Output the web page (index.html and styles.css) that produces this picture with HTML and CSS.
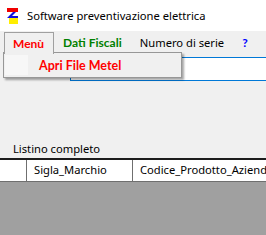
FILE: index.html
```html
<!DOCTYPE html>
<html>
<head>
<meta charset="utf-8">
<link rel="stylesheet" href="styles.css">
</head>
<body>
<div class="window">
  <div class="titlebar">
    <svg class="appicon" width="12" height="16" viewBox="0 0 12 16">
      <rect x="0" y="0" width="11" height="4" fill="#f00000"/>
      <polygon points="6,4 9,4 3,10 0,10" fill="#1010e0"/>
      <rect x="2" y="8" width="9" height="3" fill="#1010e0"/>
      <rect x="2" y="10" width="9" height="6" fill="#ffee00"/>
    </svg>
    <span class="title">Software preventivazione elettrica</span>
  </div>
  <div class="menubar">
    <div class="mitem menu-open red">Menù</div>
    <div class="mitem green">Dati Fiscali</div>
    <div class="mitem plain">Numero di serie</div>
    <div class="mitem blue">?</div>
  </div>
  <div class="searchrow">
    <div class="searchbox"></div>
  </div>
  <div class="spacer"></div>
  <div class="label">Listino completo</div>
  <div class="grid">
    <div class="ghead">
      <div class="gcell c0"></div>
      <div class="gcell c1">Sigla_Marchio</div>
      <div class="gcell c2">Codice_Prodotto_Azienda</div>
    </div>
    <div class="gbody"></div>
  </div>
  <div class="dropdown">
    <div class="iconcol"></div>
    <div class="ditem">Apri File Metel</div>
  </div>
</div>
</body>
</html>
```
FILE: styles.css
```css
html, body {
  margin: 0;
  padding: 0;
}
body {
  background: #f0f0f0;
  font-family: "Noto Sans", "DejaVu Sans", sans-serif;
  font-size: 11px;
  color: #000;
  overflow: hidden;
}
.window {
  position: relative;
  width: 266px;
  height: 235px;
  display: flex;
  flex-direction: column;
  overflow: hidden;
}
.titlebar {
  height: 31px;
  background: #fff;
  display: flex;
  align-items: center;
  padding-left: 7px;
  flex: none;
}
.appicon {
  display: block;
  margin-top: 1px;
}
.title {
  margin-left: 8px;
  font-size: 11.2px;
  white-space: nowrap;
}
.menubar {
  height: 22px;
  display: flex;
  align-items: stretch;
  flex: none;
  padding-left: 4px;
}
.mitem {
  display: flex;
  align-items: center;
  padding: 0 9px;
  white-space: nowrap;
  font-size: 11.2px;
}
.menu-open {
  border: 1px solid #a0a0a0;
  border-bottom: none;
  margin-top: 1px;
  background: #f0f0f0;
  padding: 0 9px 0 8px;
  position: relative;
  z-index: 3;
  height: 22px;
  box-sizing: border-box;
  margin-bottom: -1px;
}
.red, .green, .blue {
  font-family: Lato, "Liberation Sans", sans-serif;
  font-weight: bold;
  font-size: 12px;
}
.red { color: #ff0000; }
.green { color: #008000; }
.blue { color: #0000ff; }
.searchrow {
  margin-top: 4px;
  height: 24px;
  padding-left: 70px;
  display: flex;
  flex: none;
}
.searchbox {
  flex: none;
  width: 260px;
  height: 24px;
  box-sizing: border-box;
  border: 1px solid #0078d7;
  background: #fff;
}
.spacer {
  height: 60px;
  flex: none;
}
.label {
  height: 17px;
  padding-left: 13px;
  font-size: 11.2px;
  line-height: 16px;
  flex: none;
}
.grid {
  flex: 1;
  display: flex;
  flex-direction: column;
  border-top: 2px solid #1c1c1c;
}
.ghead {
  height: 21px;
  display: flex;
  background: #fff;
  border-bottom: 1px solid #6f6f6f;
  flex: none;
}
.gcell {
  height: 21px;
  line-height: 20px;
  white-space: nowrap;
  overflow: hidden;
  box-sizing: border-box;
  font-size: 11.2px;
}
.c0 { width: 27px; border-right: 1px solid #6f6f6f; flex: none; }
.c1 { width: 106px; padding-left: 7px; border-right: 1px solid #6f6f6f; flex: none; }
.c2 { width: 140px; padding-left: 7px; flex: none; }
.gbody {
  flex: 1;
  background: #a0a0a0;
}
.dropdown {
  position: absolute;
  left: 3px;
  top: 52px;
  width: 179px;
  height: 26px;
  box-sizing: border-box;
  border: 1px solid #979797;
  background: #f0f0f0;
  box-shadow: 2px 2px 2px rgba(0, 0, 0, 0.35);
  display: flex;
  align-items: center;
  z-index: 2;
}
.iconcol {
  position: absolute;
  left: 1px;
  top: 2px;
  width: 23px;
  height: 20px;
  background: #f7f7f7;
}
.ditem {
  margin-left: 35px;
  color: #ff0000;
  font-family: Lato, "Liberation Sans", sans-serif;
  font-weight: bold;
  font-size: 12.5px;
  position: relative;
}
```
